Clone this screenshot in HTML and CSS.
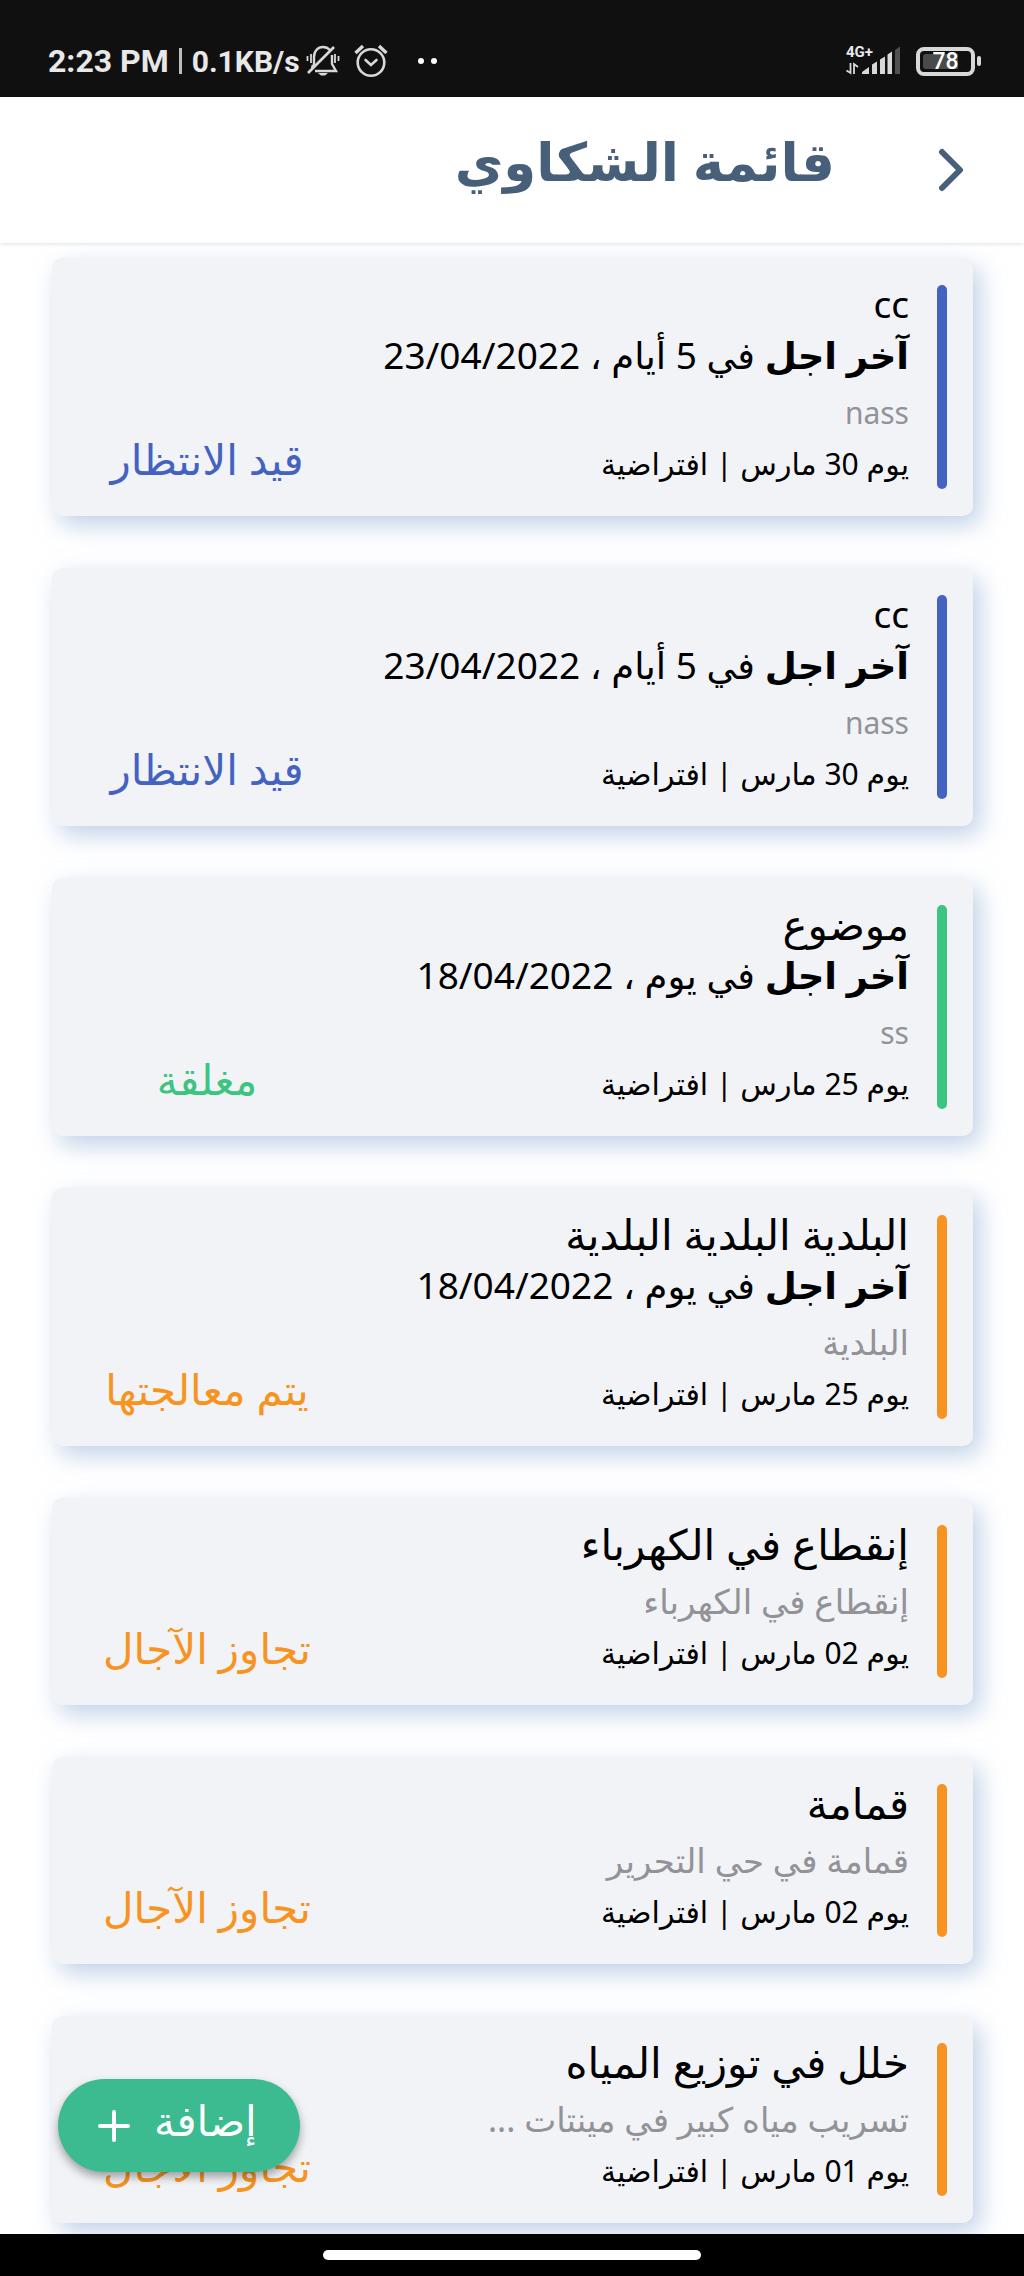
FILE: index.html
```html
<!DOCTYPE html>
<html lang="ar" dir="rtl">
<head>
<meta charset="utf-8">
<meta name="viewport" content="width=device-width, initial-scale=1">
<title>قائمة الشكاوي</title>
<link rel="stylesheet" href="styles.css">
</head>
<body>
<div class="status-bar" dir="ltr">
  <div class="status-side">
    <span class="clock">2:23 PM</span>
    <span class="divider"></span>
    <span class="speed">0.1KB/s</span>
    <svg class="bell" width="34" height="34" viewBox="0 0 34 34" fill="none" stroke="#d8d8d8" stroke-width="2.4" aria-hidden="true">
      <path d="M8 21V13C8 7 12 3 17 3C20 3 22 4 24 6M26 11V20L30 27H9M7 21L6 24"/>
      <path d="M2 29L28 3" stroke-width="2.6"/>
      <path d="M12 29H22L19 31.500H15Z" fill="#d8d8d8" stroke="none"/>
      <path d="M1.500 12V17M5 10V19M29 10V19M32.500 12V17" stroke-width="1.800"/>
    </svg>
    <svg class="alarm" width="34" height="34" viewBox="0 0 34 34" fill="none" stroke="#d8d8d8" stroke-width="2.6" aria-hidden="true">
      <circle cx="17" cy="18.500" r="13.300"/>
      <path d="M11.500 16L17 21L22.500 16" stroke-linecap="round"/>
      <path d="M1.500 9L9 2M25 2L32.500 9" stroke-width="3.400"/>
    </svg>
    <span class="dots"><i></i><i></i></span>
  </div>
  <div class="status-side">
    <div class="network">
      <span class="network-type">4G+</span>
      <svg width="56" height="30" viewBox="0 0 56 30" aria-hidden="true">
        <path d="M4.500 17V27L0.500 24.500M8 28V18L12 21" fill="none" stroke="#d8d8d8" stroke-width="1.800"/>
        <path d="M16 28V26L23 21V28ZM26 28V18.500L31 15.500V28ZM34 28V13.500L39 10.500V28ZM41.500 28V8.500L46 5.500V28Z" fill="#d8d8d8"/>
        <path d="M49 28V4L54 0.500V28Z" fill="#505050"/>
      </svg>
    </div>
    <div class="battery"><span class="battery-body"><span class="battery-level">78</span></span></div>
  </div>
</div>
<header class="app-header">
  <button class="back" type="button" aria-label="رجوع">
    <svg width="26" height="44" viewBox="0 0 26 44" fill="none" stroke="#475f78" stroke-width="6" stroke-linecap="round" stroke-linejoin="round"><path d="M4 4L22 22L4 40"/></svg>
  </button>
  <h1>قائمة الشكاوي</h1>
</header>
<main>
  <ul class="complaints">
    <li class="card pending">
      <div class="details">
        <h2 class="latin">cc</h2>
        <p class="deadline"><strong>آخر اجل</strong> في 5 أيام ، 23/04/2022</p>
        <p class="description latin">nass</p>
        <p class="date">يوم 30 مارس | افتراضية</p>
      </div>
      <p class="state">قيد الانتظار</p>
    </li>
    <li class="card pending">
      <div class="details">
        <h2 class="latin">cc</h2>
        <p class="deadline"><strong>آخر اجل</strong> في 5 أيام ، 23/04/2022</p>
        <p class="description latin">nass</p>
        <p class="date">يوم 30 مارس | افتراضية</p>
      </div>
      <p class="state">قيد الانتظار</p>
    </li>
    <li class="card closed">
      <div class="details">
        <h2>موضوع</h2>
        <p class="deadline"><strong>آخر اجل</strong> في يوم ، 18/04/2022</p>
        <p class="description latin">ss</p>
        <p class="date">يوم 25 مارس | افتراضية</p>
      </div>
      <p class="state">مغلقة</p>
    </li>
    <li class="card late">
      <div class="details">
        <h2>البلدية البلدية البلدية</h2>
        <p class="deadline"><strong>آخر اجل</strong> في يوم ، 18/04/2022</p>
        <p class="description">البلدية</p>
        <p class="date">يوم 25 مارس | افتراضية</p>
      </div>
      <p class="state">يتم معالجتها</p>
    </li>
    <li class="card late">
      <div class="details">
        <h2>إنقطاع في الكهرباء</h2>
        <p class="description">إنقطاع في الكهرباء</p>
        <p class="date">يوم 02 مارس | افتراضية</p>
      </div>
      <p class="state">تجاوز الآجال</p>
    </li>
    <li class="card late">
      <div class="details">
        <h2>قمامة</h2>
        <p class="description">قمامة في حي التحرير</p>
        <p class="date">يوم 02 مارس | افتراضية</p>
      </div>
      <p class="state">تجاوز الآجال</p>
    </li>
    <li class="card late">
      <div class="details">
        <h2>خلل في توزيع المياه</h2>
        <p class="description">تسريب مياه كبير في مينتات ...</p>
        <p class="date">يوم 01 مارس | افتراضية</p>
      </div>
      <p class="state">تجاوز الآجال</p>
    </li>
  </ul>
  <button class="add" type="button">
    <span>إضافة</span>
    <svg width="32" height="32" viewBox="0 0 32 32" fill="none" stroke="#fff" stroke-width="4" stroke-linecap="round" aria-hidden="true"><path d="M16 2V30M2 16H30"/></svg>
  </button>
</main>
<div class="gesture-bar"><span></span></div>
</body>
</html>
```
FILE: styles.css
```css
* { box-sizing: border-box; }
body {
  margin: 0;
  min-height: 100vh;
  display: flex;
  flex-direction: column;
  background: #fff;
  color: #000;
  font-family: "Noto Sans", "DejaVu Sans", sans-serif;
}
h1, h2, p, ul { margin: 0; padding: 0; }
button { border: 0; padding: 0; font: inherit; cursor: pointer; }
svg { display: block; }

.status-bar {
  height: 97px;
  padding: 25px 43px 0 48px;
  display: flex;
  justify-content: space-between;
  align-items: center;
  background: #101010;
  color: #e8e8e8;
  font-family: Roboto, sans-serif;
}
.status-side { display: flex; align-items: center; }
.clock { font-size: 32px; font-weight: 700; }
.divider { width: 3px; height: 26px; margin: 0 10px; background: #bdbdbd; }
.speed { font-size: 30px; font-weight: 700; }
.bell { margin-left: 6px; }
.alarm { margin-left: 14px; }
.dots { display: flex; gap: 7px; margin-left: 30px; }
.dots i { width: 6px; height: 6px; border-radius: 50%; background: #fff; }
.network { position: relative; margin-right: 14px; }
.network-type {
  position: absolute;
  top: -3px;
  left: 0;
  font-size: 15px;
  line-height: 18px;
  font-weight: 700;
}
.battery { display: flex; align-items: center; gap: 2px; }
.battery::after { content: ""; width: 4px; height: 10px; border-radius: 2px; background: #d8d8d8; }
.battery-body { width: 59px; height: 29px; padding: 3px; border: 4px solid #d8d8d8; border-radius: 8px; }
.battery-level {
  display: block;
  height: 15px;
  text-align: center;
  font-size: 23px;
  line-height: 15px;
  font-weight: 500;
  color: #fff;
  border-radius: 3px;
  background: linear-gradient(to right, #4a4a4a 78%, transparent 78%);
}

.app-header {
  position: relative;
  z-index: 1;
  height: 146px;
  padding: 0 60px 0 58px;
  display: flex;
  align-items: center;
  gap: 103px;
  background: #fff;
  box-shadow: 0 1px 4px rgba(0, 0, 0, .12);
}
.back { background: none; }
.app-header h1 { padding-bottom: 18px; color: #475f78; font-size: 53px; line-height: 80px; font-weight: 700; }

main { position: relative; flex: 1; overflow: hidden; padding: 15px 51px 11px 52px; }
.complaints { list-style: none; display: flex; flex-direction: column; gap: 52px; }
.card {
  --state: #f79321;
  display: flex;
  align-items: stretch;
  gap: 28px;
  padding: 27px 26px 27px 0;
  border-radius: 10px;
  background: #f1f3f7;
  box-shadow: 7px 9px 24px rgba(150, 178, 215, .6);
}
.card::before { content: ""; flex: 0 0 10px; border-radius: 5px; background: var(--state); }
.pending { --state: #4462c0; }
.closed { --state: #3ec481; }
.details { flex: 1; min-width: 0; }
.details h2, .deadline { margin-bottom: 13px; line-height: 38px; font-weight: 400; }
.details h2 { font-size: 42px; }
.deadline, .details h2.latin { font-size: 37px; }
.deadline { white-space: nowrap; }
.description { font-size: 34px; line-height: 51px; color: #929297; }
.description.latin { font-size: 30px; }
.date { font-size: 30px; line-height: 51px; }
.state {
  flex: 0 0 310px;
  align-self: flex-end;
  text-align: center;
  font-size: 42px;
  line-height: 60px;
  color: var(--state);
}

.add {
  position: absolute;
  left: 58px;
  bottom: 62px;
  height: 93px;
  padding: 0 43px 0 40px;
  display: flex;
  align-items: center;
  gap: 24px;
  border-radius: 47px;
  background: #3cbb91;
  color: #fff;
  font-size: 42px;
  line-height: 60px;
  box-shadow: 0 5px 10px rgba(0, 0, 0, .35);
}
.add span { padding-bottom: 12px; }

.gesture-bar { height: 42px; padding-top: 16px; background: #000; }
.gesture-bar span { display: block; width: 37%; height: 10px; margin: 0 auto; border-radius: 5px; background: #fff; }
```
